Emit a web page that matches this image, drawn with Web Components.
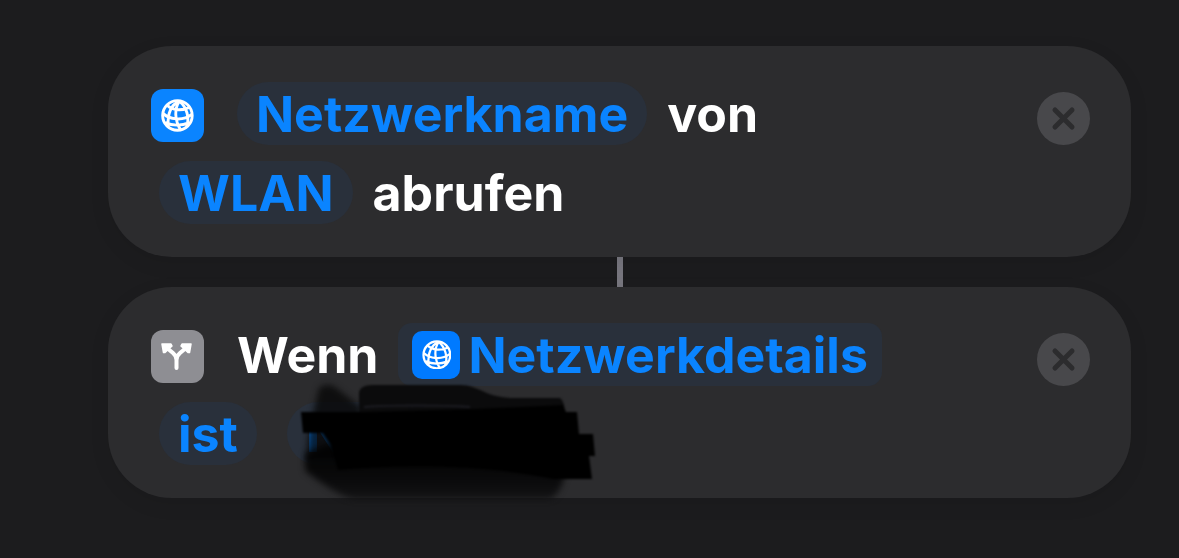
<!DOCTYPE html>
<html lang="de">
<head>
<meta charset="utf-8">
<meta name="viewport" content="width=device-width, initial-scale=1">
<title>Kurzbefehle</title>
<style>
  body { margin: 0; background: #1c1c1e; color: #fff; font-family: Inter, "Liberation Sans", sans-serif; font-size: 50px; font-weight: 700; line-height: 61px; }
</style>
</head>
<body>
<shortcut-editor></shortcut-editor>
<script>
const define = (name, html) => {
  const template = document.createElement('template');
  template.innerHTML = html;
  customElements.define(name, class extends HTMLElement {
    constructor() {
      super();
      this.attachShadow({ mode: 'open' }).append(template.content.cloneNode(true));
    }
  });
};

define('globe-icon', `
<style>
  :host { display: grid; place-items: center; flex: none; box-sizing: border-box; width: 53px; height: 53px; border-radius: 12px; background: #0a84ff; }
  :host([small]) { width: 48px; height: 48px; border-radius: 10px; background: #007aff; --stroke: 2.4; }
  svg { width: 62%; height: 62%; }
</style>
<svg viewBox="0 0 32 32" fill="none" stroke="#fff" style="stroke-width: var(--stroke, 2.8)" aria-hidden="true">
  <circle cx="16" cy="16" r="14.4"/>
  <path d="M18 2C11 5 6 13 7 27M18 2C13 9 13 20 19 30M18 2C25 8 28 18 25 27M6 6C11 11 20 12 28 8M2 14C8 20 21 22 30 15M4 23C11 26 20 26 28 23"/>
</svg>`);

define('branch-icon', `
<style>
  :host { display: block; flex: none; width: 53px; height: 53px; border-radius: 12px; background: #8e8e93; }
  svg { display: block; width: 53px; height: 53px; }
</style>
<svg viewBox="0 0 53 53" fill="none" aria-hidden="true">
  <path d="M25.500 38V30Q25.500 26 22 23L16 18M25.500 30Q25.500 26 29 23L35 18" stroke="#fff" stroke-width="4" stroke-linecap="round" stroke-linejoin="round"/>
  <path d="M11 14H20L21 16L14 22.500H12.500ZM40 14H31L30 16L37 22.500H38.500Z" fill="#fff" stroke="#fff" stroke-width="1.500" stroke-linejoin="round"/>
</svg>`);

define('close-button', `
<style>
  :host { display: block; flex: none; }
  button { display: block; width: 53px; height: 53px; padding: 0; border: 0; border-radius: 50%; background: #48484b; }
  svg { display: block; }
</style>
<button type="button" aria-label="Aktion entfernen">
  <svg width="53" height="53" viewBox="0 0 53 53" stroke="#2c2c2e" stroke-width="5" stroke-linecap="round"><path d="M18 18L35 35M35 18L18 35"/></svg>
</button>`);

define('value-token', `
<style>
  :host { display: block; flex: none; }
  button { display: flex; align-items: center; gap: 8px; box-sizing: border-box; height: 63px; padding: 2px 19px 0; border: 0; border-radius: 32px; background: #29303b; color: #0a84ff; font: inherit; white-space: nowrap; }
  :host([variable]) button { padding: 2px 14px 0; border-radius: 14px; }
  :host([covered]) button { width: 280px; }
  ::slotted(globe-icon) { margin-bottom: 2px; }
</style>
<button type="button"><slot name="icon"></slot><slot></slot></button>`);

define('action-row', `
<style>
  :host { display: flex; align-items: center; gap: 20px; min-height: 63px; }
  :host([continued]) { padding-left: 8px; }
  :host([spaced]) { gap: 30px; }
  ::slotted(span) { padding-top: 2px; }
  ::slotted(globe-icon), ::slotted(branch-icon) { margin: 4px 13px 0 0; }
</style>
<slot></slot>`);

define('action-card', `
<style>
  :host { display: flex; align-items: flex-start; box-sizing: border-box; min-height: 211px; padding: 36px 41px 33px 43px; border-radius: 64px; background: #2c2c2e; box-shadow: 0 6px 20px rgb(0 0 0 / 8%); }
  .rows { flex: 1; min-width: 0; display: grid; gap: 16px; }
  close-button { margin-top: 10px; }
</style>
<div class="rows"><slot></slot></div>
<close-button></close-button>`);

define('flow-connector', `
<style>:host { display: block; width: 6px; height: 30px; margin: 0 auto; background: #77767e; }</style>`);

define('marker-scribble', `
<style>
  :host { display: block; position: absolute; left: 168px; top: 84px; pointer-events: none; }
  svg { display: block; overflow: visible; }
</style>
<svg width="340" height="140" viewBox="276 371 340 140" aria-hidden="true">
  <defs>
    <filter id="soft" x="-10%" y="-20%" width="120%" height="140%" color-interpolation-filters="sRGB"><feGaussianBlur stdDeviation="3"/></filter>
    <filter id="edge" color-interpolation-filters="sRGB"><feGaussianBlur stdDeviation="0.800"/></filter>
    <linearGradient id="fade" gradientUnits="userSpaceOnUse" x1="0" y1="465" x2="0" y2="500"><stop offset="0" stop-color="#030303"/><stop offset=".5" stop-color="#080809"/><stop offset="1" stop-color="#121213"/></linearGradient>
  </defs>
  <path d="M319 388Q327 382 335 387L362 408L352 460H306L308 435Z" fill="#060607" fill-opacity=".78" filter="url(#soft)"/>
  <path d="M305 454L325 444L568 450Q566 492 550 499H355Q342 499 305 471Z" fill="url(#fade)" fill-opacity=".9" filter="url(#soft)"/>
  <g filter="url(#edge)">
    <path d="M359 416V392Q361 385 372 385H460C480 385 484 398 515 398H560Q565 401 565 416Z" fill="#0b0b0c"/>
    <path d="M364 407C390 405 442 405 470 407" stroke="#1c1c22" stroke-width="2" fill="none"/>
    <path d="M301 412H365L475 409L563 405L566 412H577L579 434H593L595 456H589L592 479H553C500 468 430 462 338 470L331 445L323 433H303Z" fill="#000"/>
  </g>
</svg>`);

define('shortcut-editor', `
<style>
  :host { display: block; padding: 46px 48px 60px 108px; }
  action-card { position: relative; }
</style>
<action-card>
  <action-row><globe-icon></globe-icon><value-token>Netzwerkname</value-token><span>von</span></action-row>
  <action-row continued><value-token>WLAN</value-token><span>abrufen</span></action-row>
</action-card>
<flow-connector></flow-connector>
<action-card>
  <action-row><branch-icon></branch-icon><span>Wenn</span><value-token variable><globe-icon small slot="icon"></globe-icon>Netzwerkdetails</value-token></action-row>
  <action-row continued spaced><value-token>ist</value-token><value-token covered>N</value-token></action-row>
  <marker-scribble></marker-scribble>
</action-card>`);
</script>
</body>
</html>
